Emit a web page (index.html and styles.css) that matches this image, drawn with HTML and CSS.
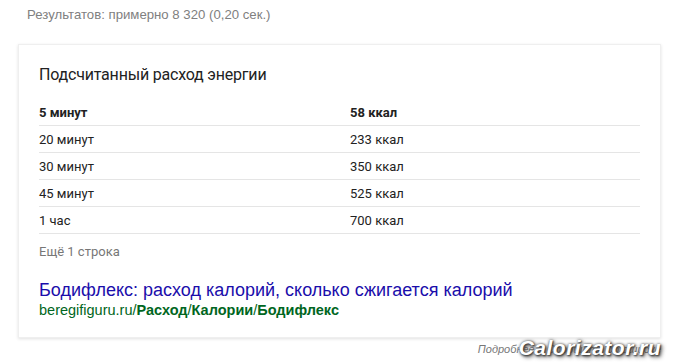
FILE: index.html
```html
<!DOCTYPE html>
<html lang="ru">
<head>
<meta charset="utf-8">
<link rel="stylesheet" href="styles.css">
</head>
<body>
<div class="stats">Результатов: примерно 8 320 (0,20 сек.)</div>
<div class="card">
  <div class="title">Подсчитанный расход энергии</div>
  <div class="table">
    <div class="row head"><span class="c1">5 минут</span><span>58 ккал</span></div>
    <div class="row"><span class="c1">20 минут</span><span>233 ккал</span></div>
    <div class="row"><span class="c1">30 минут</span><span>350 ккал</span></div>
    <div class="row"><span class="c1">45 минут</span><span>525 ккал</span></div>
    <div class="row"><span class="c1">1 час</span><span>700 ккал</span></div>
  </div>
  <div class="more">Ещё 1 строка</div>
  <a class="link">Бодифлекс: расход калорий, сколько сжигается калорий</a>
  <div class="url">beregifiguru.ru/<b>Расход</b>/<b>Калории</b>/<b>Бодифлекс</b></div>
</div>
<div class="foot">
  <span class="note">Подробнее... Сообщить об ошибке</span>
  <span class="mark">Calorizator.ru</span>
</div>
</body>
</html>
```
FILE: styles.css
```css
html, body { margin: 0; padding: 0; background: #fff; }
body {
  font-family: "Liberation Sans", Arial, sans-serif;
  width: 687px; height: 364px; overflow: hidden;
}
.stats {
  color: #808080; font-size: 13.2px;
  padding: 7px 0 0 27px; height: 44px; box-sizing: border-box;
}
.card {
  margin-left: 18px; width: 643px; height: 294px; box-sizing: border-box;
  border: 1px solid #efefef;
  box-shadow: 0 1px 3px rgba(0,0,0,0.12);
  padding: 20px 20px 0 20px;
}
.title {
  font-family: Roboto, "Liberation Sans", sans-serif;
  font-size: 16px; color: #222; letter-spacing: -0.2px;
  height: 35px;
}
.row {
  display: flex; height: 27px; align-items: center;
  border-bottom: 1px solid #e5e5e5;
  font-family: Roboto, "Liberation Sans", sans-serif;
  font-size: 13px; color: #222; box-sizing: border-box;
}
.row.head { font-weight: bold; height: 26px; }
.c1 { width: 311px; }
.more {
  font-family: Roboto, "Liberation Sans", sans-serif;
  font-size: 13px; color: #777; height: 30px; line-height: 36px;
}
.link {
  display: block; margin-top: 15px;
  font-size: 18px; color: #1a0dab; line-height: 22px;
}
.url {
  font-size: 14.5px; color: #006621; line-height: 18px;
}
.url b { font-weight: bold; }
.foot {
  display: flex; justify-content: flex-end; align-items: center;
  height: 22px; padding-right: 26px; position: relative;
}
.note { font-size: 11px; font-style: italic; color: #777; }
.mark {
  position: absolute; right: 26px; top: -2px;
  font-size: 21px; font-weight: bold; font-style: italic;
  color: #fff; letter-spacing: 0.5px;
  text-shadow: 1px 1px 2px #333, 0 0 3px #555, 2px 2px 4px #444;
}
```
